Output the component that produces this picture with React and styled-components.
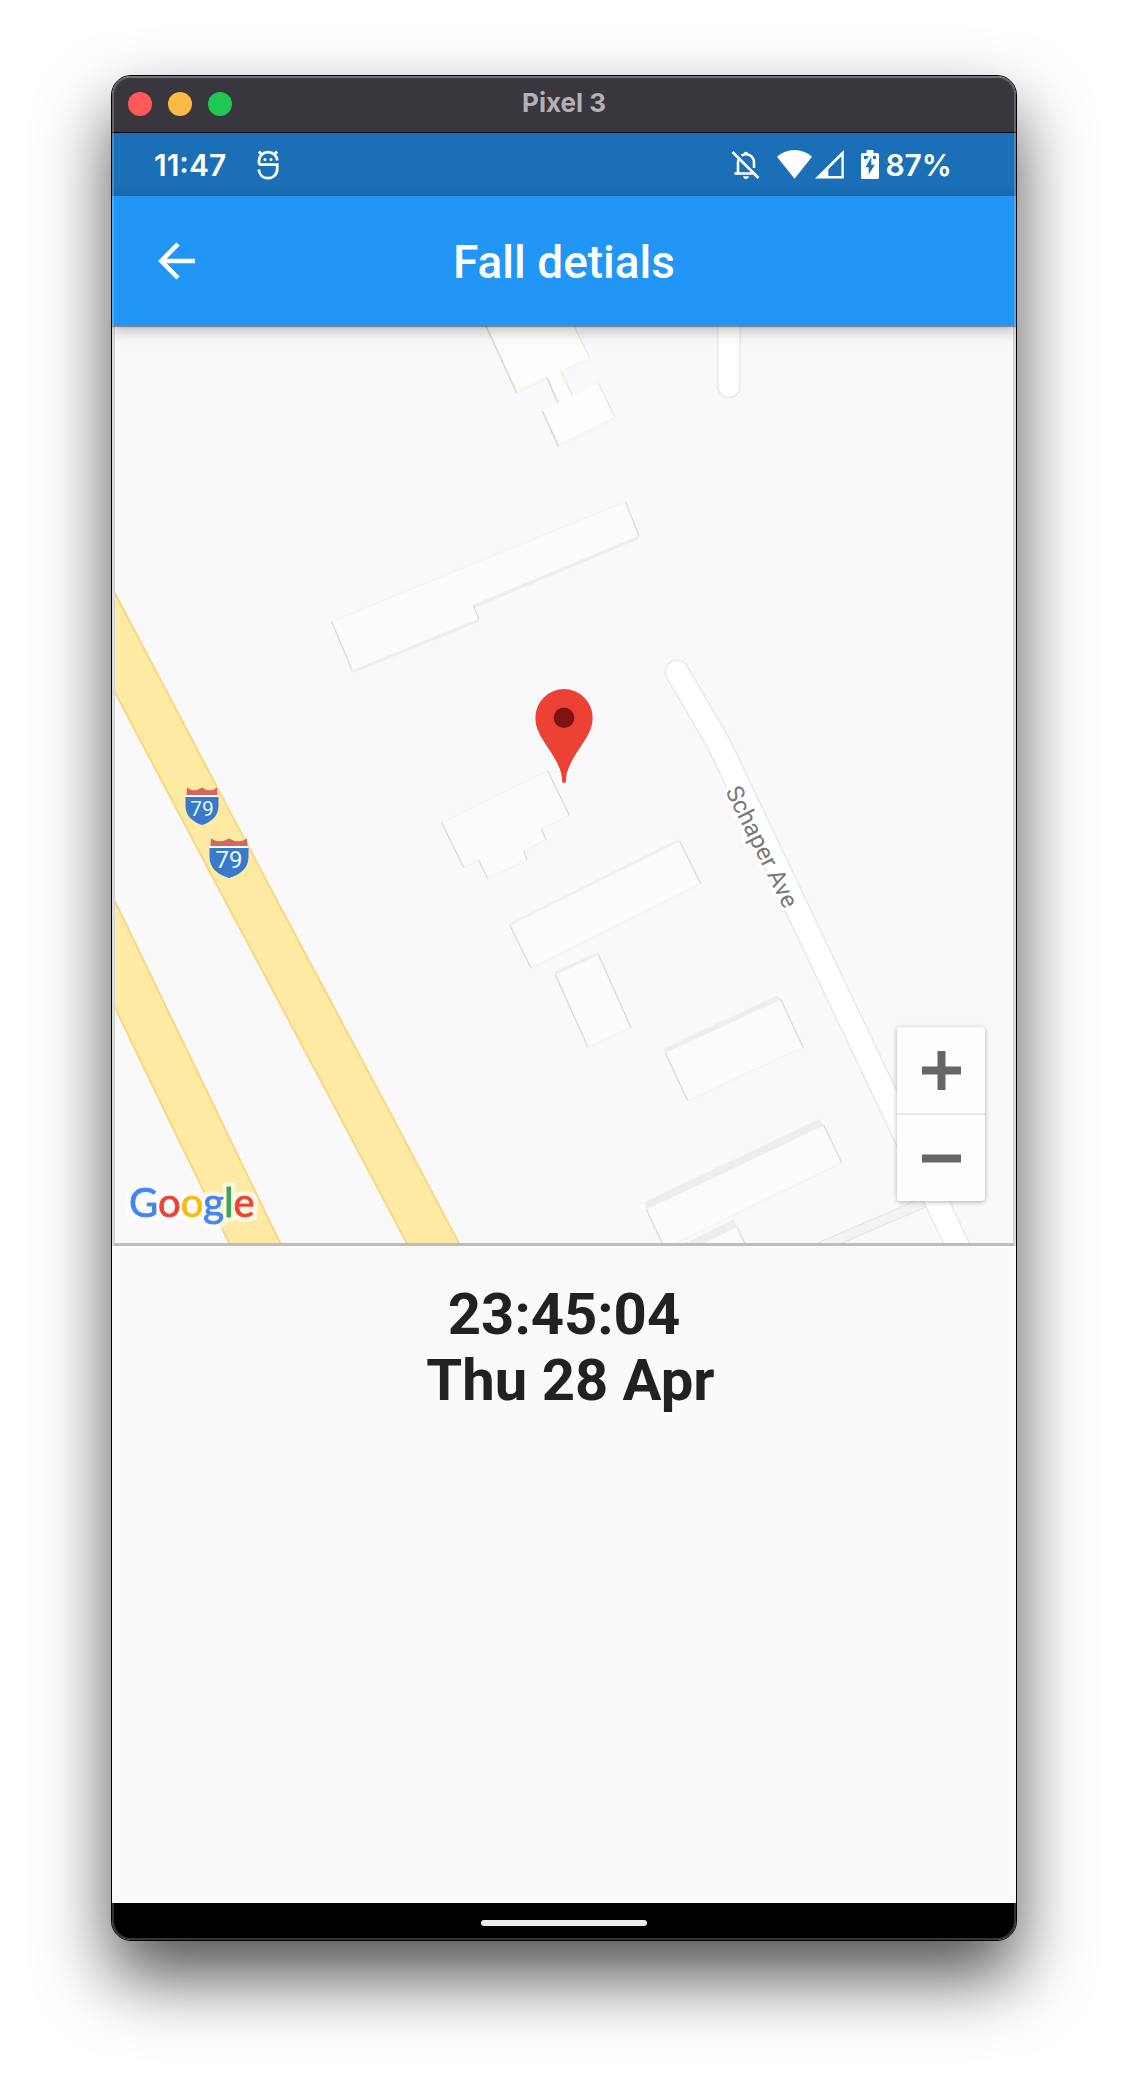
import React from 'react';
import styled, { createGlobalStyle } from 'styled-components';

const GlobalStyle = createGlobalStyle`
  *, *::before, *::after { box-sizing: border-box; }
  body {
    margin: 0;
    background: #ffffff;
    font-family: Roboto, "Liberation Sans", sans-serif;
  }
`;

const Desktop = styled.main`
  display: flex;
  flex-direction: column;
  min-height: 100vh;
  padding: 75px 111px 147px;
`;

const Window = styled.section`
  position: relative;
  display: flex;
  flex: 1;
  flex-direction: column;
  overflow: hidden;
  border: 1px solid #000000;
  border-radius: 20px;
  background: #fafafa;
  box-shadow: 0 36px 70px rgba(0, 0, 0, 0.68);

  &::after {
    content: '';
    position: absolute;
    inset: 0;
    z-index: 3;
    border-radius: 19px;
    box-shadow: inset 0 0 0 2px rgba(255, 255, 255, 0.2);
    pointer-events: none;
  }
`;

const TitleBar = styled.header`
  display: grid;
  grid-template-columns: 1fr auto 1fr;
  align-items: center;
  height: 57px;
  padding: 0 16px;
  border-bottom: 1px solid #000000;
  background: #3a363d;
  box-shadow: inset 0 2px 0 rgba(255, 255, 255, 0.15);
`;

const WindowControls = styled.div`
  display: flex;
  gap: 16px;
`;

const WindowButton = styled.button`
  width: 24px;
  height: 24px;
  padding: 0;
  border: 0;
  border-radius: 50%;
  background: ${({ $color }) => $color};
`;

const WindowTitle = styled.span`
  padding-bottom: 2px;
  color: #b4b0b8;
  font: 700 26px/32px Inter, sans-serif;
`;

const StatusBar = styled.div`
  display: flex;
  align-items: center;
  justify-content: space-between;
  height: 63px;
  padding: 0 64px 0 42px;
  background: #1a6fb7;
  color: #ffffff;
  font: 600 30px/36px Inter, sans-serif;
`;

const StatusGroup = styled.div`
  display: flex;
  align-items: center;
  gap: ${({ $gap }) => $gap}px;

  svg { display: block; }
`;

const AppBar = styled.div`
  position: relative;
  z-index: 1;
  display: grid;
  grid-template-columns: 1fr auto 1fr;
  align-items: center;
  height: 130px;
  padding: 0 40px;
  background: #2196f6;
  box-shadow: 0 1px 1px rgba(0, 0, 0, 0.35), 0 4px 14px rgba(0, 0, 0, 0.28);
`;

const BackButton = styled.button`
  display: grid;
  place-items: center;
  width: 48px;
  height: 48px;
  padding: 0;
  border: 0;
  background: transparent;
`;

const ScreenTitle = styled.h1`
  margin: 0;
  padding-top: 2px;
  color: #ffffff;
  font-size: 46px;
  font-weight: 500;
  line-height: 56px;
`;

const MapFrame = styled.div`
  position: relative;
  border: 3px solid #d4d4d4;
  border-top: 0;
  border-bottom-color: #bdbdbd;
  background: #f9f9fb;
`;

const MapCanvas = styled.svg`
  display: block;
  width: 100%;
  height: auto;
`;

const RoadLabel = styled.text`
  fill: #77787c;
  stroke: #ffffff;
  stroke-width: 6px;
  stroke-linejoin: round;
  paint-order: stroke;
  font: 400 24px Roboto, sans-serif;
`;

const ShieldLabel = styled.text`
  fill: #eaf2ff;
  font-family: Roboto, sans-serif;
  font-size: ${({ $size }) => $size}px;
  text-anchor: middle;
`;

const MapBrand = styled.text`
  font: 400 40px Lato, sans-serif;

  tspan {
    stroke: currentColor;
    stroke-width: 1px;
  }
`;

const ZoomControls = styled.div`
  position: absolute;
  right: 28px;
  bottom: 42px;
  display: flex;
  flex-direction: column;
  gap: 2px;
  overflow: hidden;
  border-radius: 4px;
  background: rgba(225, 225, 225, 0.7);
  box-shadow: 0 1px 5px rgba(0, 0, 0, 0.3);
`;

const ZoomButton = styled.button`
  display: grid;
  place-items: center;
  width: 88px;
  height: 86px;
  padding: 0;
  border: 0;
  background: rgba(255, 255, 255, 0.94);
`;

const Details = styled.div`
  flex: 1;
  padding: 35px 24px;
`;

const Timestamp = styled.p`
  margin: 0;
  color: #212121;
  font-size: 58px;
  font-weight: 700;
  line-height: 66px;
  text-align: center;
  white-space: pre;
`;

const NavBar = styled.nav`
  display: flex;
  justify-content: center;
  padding: 17px 0 14px;
  background: #000000;
`;

const HomeButton = styled.button`
  width: 166px;
  height: 6px;
  padding: 0;
  border: 0;
  border-radius: 3px;
  background: #ececec;
`;

function DebugIcon() {
  return (
    <svg width="22" height="30" viewBox="0 0 22 30" fill="none" stroke="#fff" strokeWidth="2.8" aria-hidden="true">
      <path d="M2 1.500 5 5M20 1.500 17 5" />
      <path d="M20.200 10.500C20 5.500 16 2.200 11 2.200S2 5.800 2 11v1.600c0 1.400.8 2.100 2 2.100h16.200V19c0 5.400-4 9.200-9.200 9.200S2.200 24.600 1.800 19.500" />
      <circle cx="8" cy="9.500" r="1.500" fill="#fff" stroke="none" />
      <circle cx="14" cy="9.500" r="1.500" fill="#fff" stroke="none" />
    </svg>
  );
}

function BellOffIcon() {
  return (
    <svg width="29" height="29" viewBox="0 0 29 29" fill="none" stroke="#fff" strokeWidth="2.6" aria-hidden="true">
      <path d="M1.500 2 27.500 28" />
      <path d="M3.500 23.500H22M7 23.500V12.500c0-1.500.3-2.700.8-3.800M10.500 5.600C11.700 4.700 13.200 4.200 15 4.200c4.600 0 8 3.500 8 8.300V18" />
      <path d="M12.800 4a2.200 2.200 0 0 1 4.400 0zM12.300 26.200h5.400a2.700 2.700 0 0 1-5.400 0z" fill="#fff" stroke="none" />
    </svg>
  );
}

function WifiIcon() {
  return (
    <svg width="35" height="29" viewBox="0 0 35 29" fill="#fff" aria-hidden="true">
      <path d="M0 6.800C5 2.300 11 0 17.500 0S30 2.300 35 6.800L17.500 28.700z" />
    </svg>
  );
}

function SignalIcon() {
  return (
    <svg width="29" height="29" viewBox="0 0 29 29" aria-hidden="true">
      <path d="M0 28.600 28.800 0v28.600zM13.300 26H26.400V6.300L13.300 19.300z" fill="#fff" fillRule="evenodd" />
    </svg>
  );
}

function BatteryIcon() {
  return (
    <svg width="18" height="29" viewBox="0 0 18 29" aria-hidden="true">
      <path d="M5.500 0h7v3h4Q18 3 18 4.500v23q0 1.500-1.500 1.500h-15Q0 29 0 27.500v-23Q0 3 1.500 3h4z" fill="#fff" />
      <path d="M3 6h5L5.600 9H3zM12 6h3v3h-3zM10.300 7v7.800h3.500L7.700 24.500v-7.300H4.500z" fill="#1a6fb7" />
    </svg>
  );
}

function BackIcon() {
  return (
    <svg width="37" height="38" viewBox="0 0 37 38" fill="none" stroke="#fff" strokeWidth="4.600" aria-hidden="true">
      <path d="M20 2 3.300 19 20 36M3.500 19H37" />
    </svg>
  );
}

const buildings = [
  {
    roof: '331.700,621.700 625.300,501.700 639,536 473.300,605 479,618.700 352.300,670.700',
    walls: ['639,536 639,539 476,607.500 473.300,605', '479,618.700 479.500,621.700 354.500,672.500 352.300,670.700'],
    edges: ['331.700,621.700 352.300,670.700', '625.300,501.700 639,536', '473.300,605 479,618.700'],
  },
  {
    roof: '441.700,822.700 547.700,770.700 569.300,815.300 541.300,829 546,839.300 523.700,851.300 527.300,859.700 487.700,878.700 478.700,860 463.700,867.300',
    walls: [],
    edges: ['441.700,822.700 463.700,867.300', '478.700,860 487.700,878.700', '547.700,770.700 569.300,815.300', '541.300,829 546,839.300', '523.700,851.300 527.300,859.700'],
  },
  {
    roof: '510,925.300 679.700,841 700.700,883.700 531,968',
    walls: ['510,925.300 510,923.500 678,839.500 679.700,841'],
    edges: ['510,925.300 531,968', '679.700,841 700.700,883.700'],
  },
  {
    roof: '555.300,974.700 598.300,954.300 631,1027.700 588,1047.300',
    walls: ['555.300,974.700 555.300,971.500 597,952.500 598.300,954.300'],
    edges: ['555.300,974.700 588,1047.300', '598.300,954.300 631,1027.700'],
  },
  {
    roof: '665.300,1052.700 780.700,999.300 803,1047.300 687.700,1100.700',
    walls: ['665.300,1052.700 664,1048.500 776.500,995.500 780.700,999.300'],
    edges: ['665.300,1052.700 687.700,1100.700', '780.700,999.300 803,1047.300'],
  },
  {
    roof: '646.300,1209.300 823.700,1125.300 841.700,1162.700 662.500,1249.500',
    walls: ['646.300,1209.300 645,1202 819,1119 823.700,1125.300'],
    edges: ['646.300,1209.300 664,1247', '823.700,1125.300 841.700,1162.700'],
  },
  {
    roof: '696,1246.500 737,1227 748,1250 696,1250',
    walls: ['703,1243.500 737,1227 734,1219 685,1243.500'],
    edges: ['737,1227 748,1250'],
  },
];

function Building({ roof, walls, edges }) {
  return (
    <g>
      <polygon points={roof} fill="#fbfbfb" stroke="#f2f2f3" />
      {walls.map((points) => <polygon key={points} points={points} fill="#eeeef0" />)}
      {edges.map((points) => <polyline key={points} points={points} fill="none" stroke="#dadada" strokeWidth="1.200" />)}
    </g>
  );
}

function Shield({ x, y, width, blueHeight, textSize }) {
  const half = width / 2;
  return (
    <g transform={`translate(${x} ${y})`}>
      <path d={`M${-half + 1.500} -9.500Q${-half / 2} -4 0 -9.500Q${half / 2} -4 ${half - 1.500} -9.500L${half - 1} -2H${-half + 1}z`} fill="#d9635e" />
      <rect x={-half} y="-2" width={width} height="2" fill="#fff" />
      <path d={`M${-half} 0H${half}V${blueHeight * 0.3}C${half} ${blueHeight * 0.7} ${half * 0.500} ${blueHeight * 0.9} 0 ${blueHeight}C${-half * 0.500} ${blueHeight * 0.9} ${-half} ${blueHeight * 0.7} ${-half} ${blueHeight * 0.3}z`} fill="#3879c9" />
      <ShieldLabel x="0" y={blueHeight * 0.680} $size={textSize}>79</ShieldLabel>
    </g>
  );
}

const brandLetters = [
  ['G', '#4285f4'],
  ['o', '#ea4335'],
  ['o', '#fbbc05'],
  ['g', '#4285f4'],
  ['l', '#34a853'],
  ['e', '#ea4335'],
];

function FallMap() {
  const avenue = 'M677 672 712 732Q722 749 731 769.500L831 980 962 1255';
  return (
    <MapCanvas viewBox="115 326 898 917" role="img" aria-label="Map of the fall location">
      <defs>
        <filter id="brand-halo" x="-10%" y="-20%" width="120%" height="140%">
          <feMorphology in="SourceAlpha" operator="dilate" radius="4" result="spread" />
          <feFlood floodColor="#ffffff" floodOpacity="0.65" />
          <feComposite in2="spread" operator="in" />
          <feMerge>
            <feMergeNode />
            <feMergeNode in="SourceGraphic" />
          </feMerge>
        </filter>
      </defs>

      <g fill="#feeaa2" stroke="#f8d880" strokeWidth="2">
        <path d="M110 584 217 787 282 910 394 1120 464 1253H412L341.700 1120 230 910 110 683z" />
        <path d="M110 891 220.700 1120 285 1253H234L169 1120 110 997z" />
      </g>

      <polygon
        points="485,324 516.700,392.700 546.700,377 558,402.700 542.300,411 558.700,446.700 614.700,417.300 598.700,383 572.700,396 561,371 589.700,357.700 573,324"
        fill="#fdfdfb"
      />
      <g fill="none" stroke="#fbf5ef" strokeWidth="3">
        <path d="M517 392.700 546.700 378M561 371.500 589.700 358.700M558.700 445.700 614.700 418" />
      </g>
      <g fill="none" stroke="#dad7d3" strokeWidth="1.500">
        <path d="M485 324 516.700 392.700M546.700 377 558 402.700M542.300 411 558.700 446.700" />
      </g>
      <g fill="none" stroke="#e2e0de" strokeWidth="1">
        <path d="M598.700 383 614.700 417.300M561 371 572.700 396M573 324 589.700 357.700" />
      </g>

      {buildings.map((b) => <Building key={b.roof} {...b} />)}

      <path d="M807 1247.500 922 1198 928 1206 832 1247.500" fill="#f2f3f5" stroke="#e2e3e6" />
      <g fill="none" strokeLinecap="round">
        <path d="M729 300V386" stroke="#e9e9eb" strokeWidth="24" />
        <path d="M729 300V386" stroke="#ffffff" strokeWidth="21" />
        <path d={avenue} stroke="#e9e9eb" strokeWidth="25" />
        <path d={avenue} stroke="#ffffff" strokeWidth="22" />
      </g>
      <RoadLabel transform="translate(725 791) rotate(63.500)">Schaper Ave</RoadLabel>

      <Shield x={202} y={797} width={33} blueHeight={28} textSize={21} />
      <Shield x={229} y={848} width={39} blueHeight={30} textSize={24} />

      <g>
        <path
          d="M564 689A28.700 28.700 0 0 0 535.300 717.700C535.300 733 546 743 555 759C560 768 562 774 562 781Q562 783 564 783T566 781C566 774 568 768 573 759C582 743 592.700 733 592.700 717.700A28.700 28.700 0 0 0 564 689z"
          fill="#ec4235"
          stroke="#ffffff"
          strokeWidth="3"
          paintOrder="stroke"
        />
        <circle cx="564" cy="717.700" r="10.300" fill="#7f1310" />
      </g>

      <MapBrand x="129" y="1217" filter="url(#brand-halo)">
        {brandLetters.map(([letter, color], i) => (
          <tspan key={i} fill={color} color={color}>{letter}</tspan>
        ))}
      </MapBrand>
    </MapCanvas>
  );
}

export default function App() {
  return (
    <>
      <GlobalStyle />
      <Desktop>
        <Window>
          <TitleBar>
            <WindowControls>
              <WindowButton $color="#ff5a58" aria-label="Close" />
              <WindowButton $color="#ffb945" aria-label="Minimize" />
              <WindowButton $color="#20c853" aria-label="Zoom window" />
            </WindowControls>
            <WindowTitle>Pixel 3</WindowTitle>
          </TitleBar>
          <StatusBar>
            <StatusGroup $gap={31}>
              <span>11:47</span>
              <DebugIcon />
            </StatusGroup>
            <StatusGroup $gap={17}>
              <BellOffIcon />
              <StatusGroup $gap={3}>
                <WifiIcon />
                <SignalIcon />
              </StatusGroup>
              <StatusGroup $gap={6}>
                <BatteryIcon />
                <span>87%</span>
              </StatusGroup>
            </StatusGroup>
          </StatusBar>
          <AppBar>
            <BackButton aria-label="Back"><BackIcon /></BackButton>
            <ScreenTitle>Fall detials</ScreenTitle>
          </AppBar>
          <MapFrame>
            <FallMap />
            <ZoomControls>
              <ZoomButton aria-label="Zoom in">
                <svg width="39" height="39" viewBox="0 0 39 39" aria-hidden="true">
                  <path d="M0 19.500H39M19.500 0V39" stroke="#666" strokeWidth="8" />
                </svg>
              </ZoomButton>
              <ZoomButton aria-label="Zoom out">
                <svg width="39" height="39" viewBox="0 0 39 39" aria-hidden="true">
                  <path d="M0 19.500H39" stroke="#666" strokeWidth="8" />
                </svg>
              </ZoomButton>
            </ZoomControls>
          </MapFrame>
          <Details>
            <Timestamp>{'23:45:04\n Thu 28 Apr'}</Timestamp>
          </Details>
          <NavBar>
            <HomeButton aria-label="Home" />
          </NavBar>
        </Window>
      </Desktop>
    </>
  );
}
